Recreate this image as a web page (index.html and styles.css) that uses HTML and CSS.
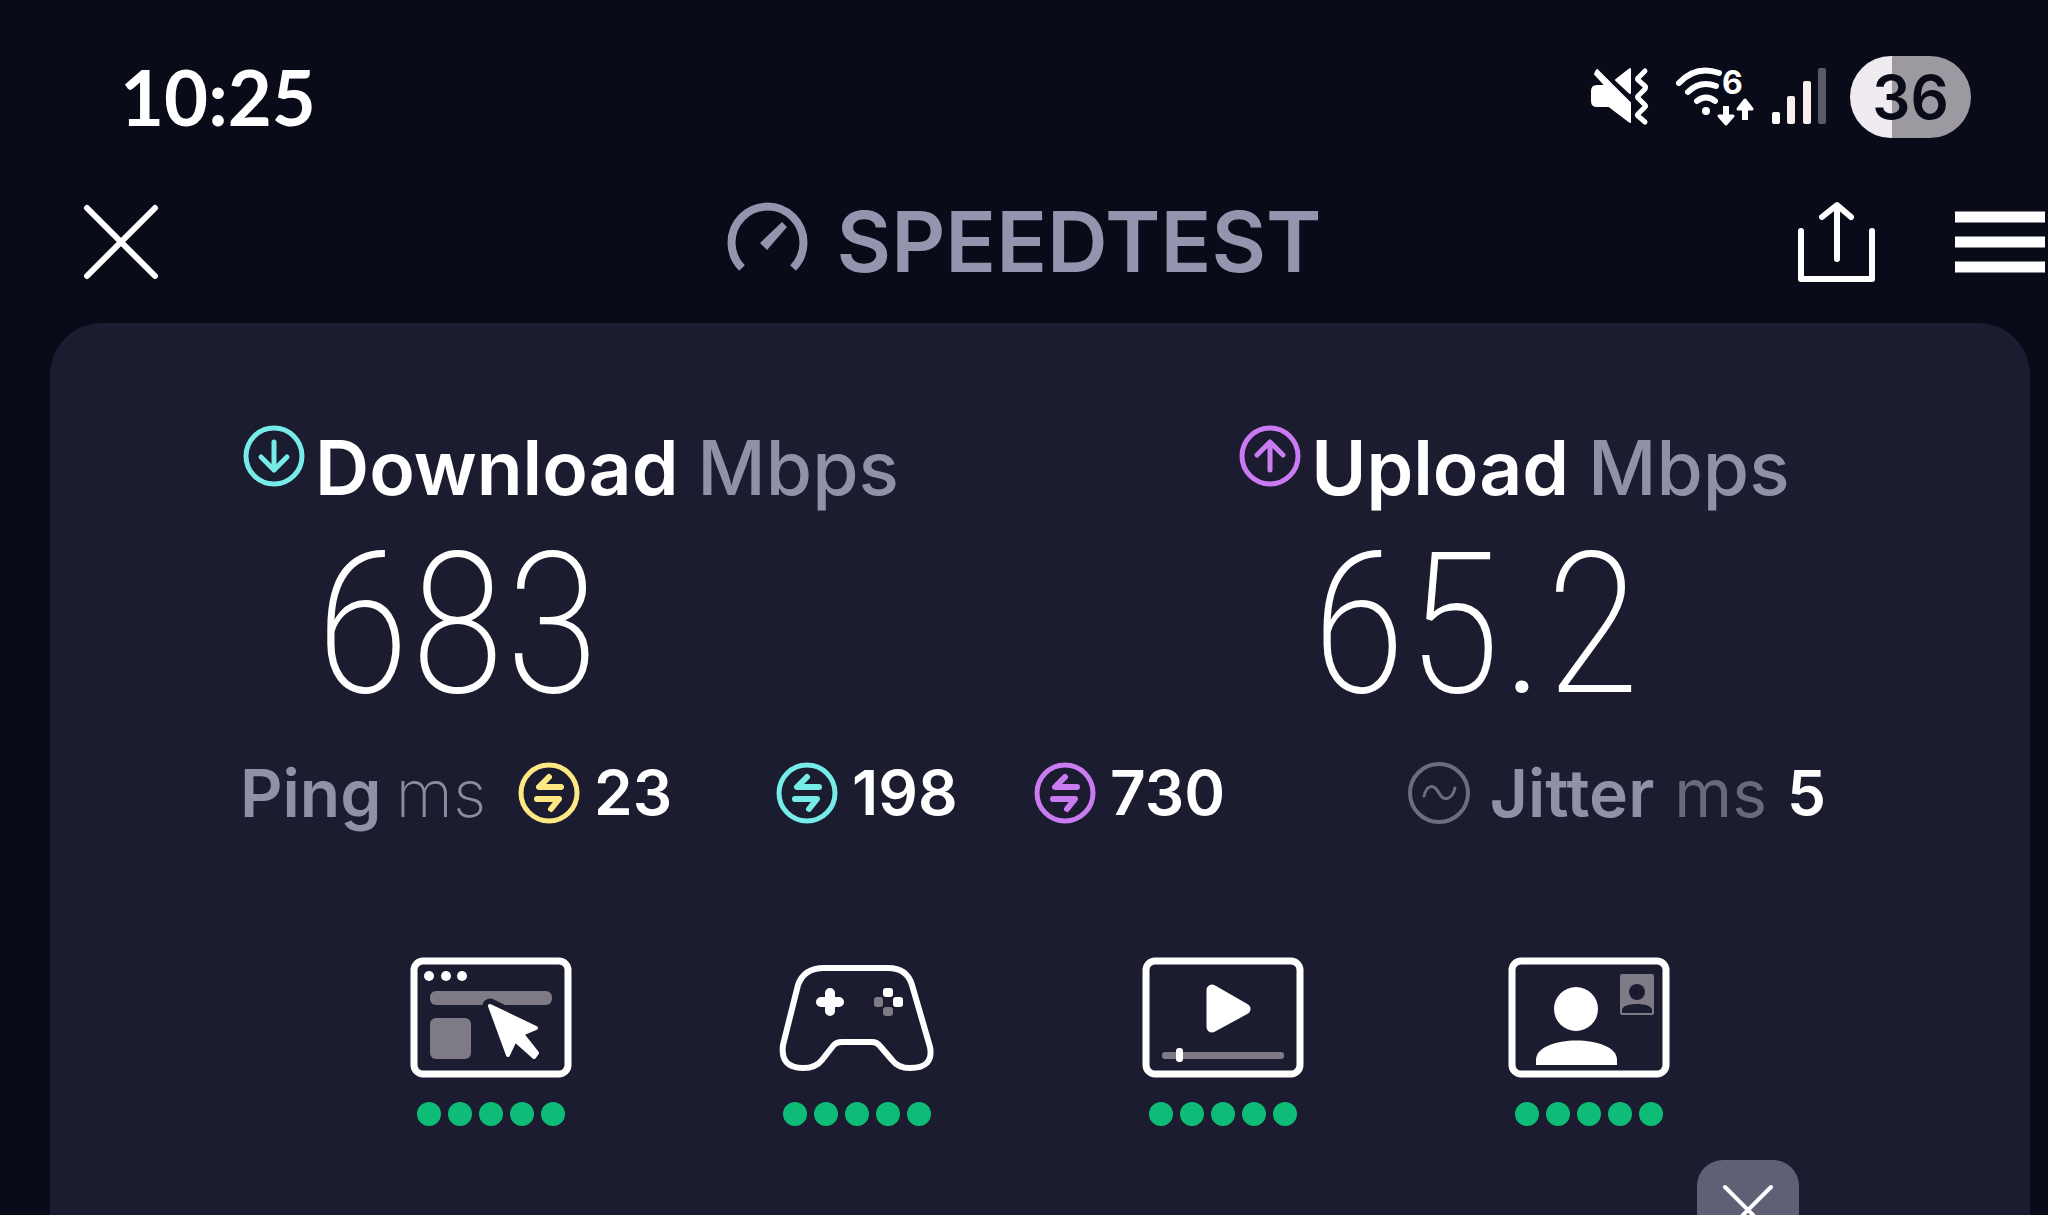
FILE: index.html
```html
<!DOCTYPE html>
<html lang="en">
<head>
  <meta charset="UTF-8" />
  <meta name="viewport" content="width=device-width, initial-scale=1.0"/>
  <title>Speedtest</title>
  <link rel="stylesheet" href="styles.css">
</head>
<body>
  <!-- shared shapes -->
  <svg class="defs" width="0" height="0" aria-hidden="true">
    <symbol id="swap" viewBox="0 0 62 62">
      <circle cx="31" cy="31" r="28" fill="none" stroke="currentColor" stroke-width="5"/>
      <path d="M31 15L21 25H43M19 37H41L33 47" fill="none" stroke="currentColor" stroke-width="6" stroke-linecap="round" stroke-linejoin="round"/>
    </symbol>
  </svg>

  <div class="status-bar">
    <time class="clock">10:25</time>
    <div class="status-icons">
      <svg width="74" height="64" viewBox="0 0 74 64" aria-label="Muted">
        <path d="M9 5L42 38V57L21 41H9Q4 41 4 36V26Q4 21 9 21H18L7 9Z" fill="#fff" stroke="#fff" stroke-width="2" stroke-linejoin="round"/>
        <path d="M28 15L42 4V28Z" fill="#fff" stroke="#fff" stroke-width="2" stroke-linejoin="round"/>
        <path d="M57 6L50 13Q49 14 50 15L57 21Q58 22 57 24L50 31Q49 32 50 33L57 40Q58 41 57 42L50 49Q49 50 50 51L57 57" fill="none" stroke="#fff" stroke-width="5" stroke-linecap="round"/>
      </svg>
      <svg width="84" height="64" viewBox="0 0 84 64" aria-label="Wi-Fi 6">
        <g fill="none" stroke="#fff" stroke-width="6" stroke-linecap="round">
          <path d="M5 18Q22 0 45 8"/>
          <path d="M14 27Q26 15 42 21"/>
          <path d="M23 36Q32 29 41 36"/>
          <path d="M52 41V56M71 38V55" stroke-linecap="butt"/>
        </g>
        <circle cx="32" cy="46" r="4" fill="#fff"/>
        <path d="M45 51H59L52 59ZM64 44H78L71 35Z" fill="#fff" stroke="#fff" stroke-width="3" stroke-linejoin="round"/>
        <text x="48" y="29" class="wifi-gen">6</text>
      </svg>
      <svg width="68" height="64" viewBox="0 0 68 64" aria-label="Signal">
        <rect x="2" y="47" width="8" height="12" rx="2" fill="#fff"/>
        <rect x="17" y="31" width="8" height="28" rx="2" fill="#f8efee"/>
        <rect x="33" y="16" width="8" height="43" rx="2" fill="#f8efee"/>
        <rect x="48" y="3" width="8" height="56" rx="2" fill="#5b5b67"/>
      </svg>
      <span class="battery">36</span>
    </div>
  </div>

  <header>
    <div class="left">
      <button class="icon-btn" aria-label="Close">
        <svg width="76" height="76" viewBox="0 0 76 76"><path d="M4 4L72 72M72 4L4 72" fill="none" stroke="#fff" stroke-width="6" stroke-linecap="round"/></svg>
      </button>
    </div>
    <h1>
      <svg width="82" height="82" viewBox="0 0 82 82" aria-hidden="true">
        <path d="M15 67A36 36 0 1 1 66 67" fill="none" stroke="#9394ad" stroke-width="8"/>
        <path d="M55 21L60 26L40 49L33 42Z" fill="#9394ad"/>
      </svg>
      SPEEDTEST
    </h1>
    <div class="actions">
      <button class="icon-btn" aria-label="Share">
        <svg width="80" height="82" viewBox="0 0 80 82"><path d="M4 30V78H75V30M40 58V5M25 16L40 4L54 16" fill="none" stroke="#fff" stroke-width="6" stroke-linecap="round" stroke-linejoin="round"/></svg>
      </button>
      <button class="icon-btn" aria-label="Menu">
        <svg width="90" height="62" viewBox="0 0 90 62"><path d="M0 6H90M0 31H90M0 56H90" stroke="#fff" stroke-width="11"/></svg>
      </button>
    </div>
  </header>

  <main class="panel">
    <div class="speeds">
      <section class="speed">
        <svg class="download" width="62" height="62" viewBox="0 0 62 62" aria-hidden="true">
          <circle cx="31" cy="31" r="28" fill="none" stroke="currentColor" stroke-width="5"/>
          <path d="M31 17V45M18 32L31 45L44 32" fill="none" stroke="currentColor" stroke-width="5" stroke-linecap="round" stroke-linejoin="round"/>
        </svg>
        <h2>Download <span>Mbps</span></h2>
        <p class="value">683</p>
      </section>
      <section class="speed">
        <svg class="upload" width="62" height="62" viewBox="0 0 62 62" aria-hidden="true">
          <circle cx="31" cy="31" r="28" fill="none" stroke="currentColor" stroke-width="5"/>
          <path d="M31 45V17M18 30L31 17L44 30" fill="none" stroke="currentColor" stroke-width="5" stroke-linecap="round" stroke-linejoin="round"/>
        </svg>
        <h2>Upload <span>Mbps</span></h2>
        <p class="value">65.2</p>
      </section>
    </div>

    <div class="latency">
      <div class="ping">
        <span class="label">Ping</span>
        <span class="unit thin">ms</span>
      </div>
      <div class="reading"><svg class="idle" width="62" height="62"><use href="#swap"/></svg>23</div>
      <div class="reading"><svg class="download" width="62" height="62"><use href="#swap"/></svg>198</div>
      <div class="reading"><svg class="upload" width="62" height="62"><use href="#swap"/></svg>730</div>
      <div class="jitter">
        <svg width="62" height="62" viewBox="0 0 62 62" fill="none" stroke="#6d6d7e" aria-hidden="true">
          <circle cx="31" cy="31" r="29" stroke-width="4"/>
          <path d="M16 34C19 22 26 22 31 31C36 40 44 38 47 26" stroke-width="3" stroke-linecap="round"/>
        </svg>
        <span class="label">Jitter</span>
        <span class="unit">ms</span>
        <span>5</span>
      </div>
    </div>

    <ul class="quality">
      <li>
        <svg width="162" height="121" viewBox="0 0 162 121" aria-label="Browsing">
          <rect x="4" y="4" width="154" height="113" rx="9" fill="none" stroke="#fff" stroke-width="7"/>
          <g fill="#fff"><circle cx="19" cy="19" r="5"/><circle cx="36" cy="19" r="5"/><circle cx="52" cy="19" r="5"/></g>
          <rect x="20" y="34" width="122" height="14" rx="6" fill="#7e7b87"/>
          <rect x="20" y="61" width="41" height="41" rx="6" fill="#7e7b87"/>
          <path d="M80 49L126 72L111 79L98 98Z" fill="#1b1c2f" stroke="#1b1c2f" stroke-width="15" stroke-linejoin="round"/>
          <path d="M80 49L126 71L112 77L127 96L124 100L105 83L98 98Z" fill="#fff" stroke="#fff" stroke-width="4" stroke-linejoin="round"/>
        </svg>
        <div class="dots"><i></i><i></i><i></i><i></i><i></i></div>
      </li>
      <li>
        <svg width="162" height="121" viewBox="0 0 162 121" aria-label="Gaming">
          <path d="M48 11H112Q131 11 136 28L154 90Q158 111 134 111Q122 111 116 103L104 89Q101 85 96 85H66Q60 85 57 89L46 103Q40 111 27 111Q4 111 7 88L22 28Q28 11 48 11Z" fill="none" stroke="#fff" stroke-width="6"/>
          <path d="M54 36V54M45 45H63" stroke="#fff" stroke-width="10" stroke-linecap="round"/>
          <rect x="107" y="31" width="10" height="9" rx="3" fill="#fff"/>
          <rect x="117" y="40" width="10" height="10" rx="3" fill="#fff"/>
          <rect x="98" y="40" width="9" height="10" rx="3" fill="#7e7b87"/>
          <rect x="107" y="50" width="10" height="9" rx="3" fill="#7e7b87"/>
        </svg>
        <div class="dots"><i></i><i></i><i></i><i></i><i></i></div>
      </li>
      <li>
        <svg width="162" height="121" viewBox="0 0 162 121" aria-label="Streaming">
          <rect x="4" y="4" width="154" height="113" rx="9" fill="none" stroke="#fff" stroke-width="7"/>
          <path d="M70 33V70L103 52Z" fill="#fff" stroke="#fff" stroke-width="11" stroke-linejoin="round"/>
          <rect x="20" y="95" width="122" height="7" rx="3" fill="#7e7b87"/>
          <rect x="34" y="91" width="7" height="14" rx="3" fill="#fff"/>
        </svg>
        <div class="dots"><i></i><i></i><i></i><i></i><i></i></div>
      </li>
      <li>
        <svg width="162" height="121" viewBox="0 0 162 121" aria-label="Video chat">
          <rect x="4" y="4" width="154" height="113" rx="9" fill="none" stroke="#fff" stroke-width="7"/>
          <circle cx="68" cy="52" r="22" fill="#fff"/>
          <path d="M28 108V103C28 77 109 77 109 103V108Z" fill="#fff"/>
          <rect x="112" y="17" width="34" height="41" rx="2" fill="#7e7b87"/>
          <circle cx="129" cy="35" r="8" fill="#1b1c2f"/>
          <path d="M114 56V53C114 45 144 45 144 53V56Z" fill="#1b1c2f"/>
        </svg>
        <div class="dots"><i></i><i></i><i></i><i></i><i></i></div>
      </li>
    </ul>

    <button class="dismiss" aria-label="Dismiss">
      <svg width="50" height="50" viewBox="0 0 50 50"><path d="M2 2L48 48M48 2L2 48" stroke="#fff" stroke-width="4" stroke-linecap="round"/></svg>
    </button>
  </main>
</body>
</html>
```
FILE: styles.css
```css
body {
  font-family: Inter, "Liberation Sans", sans-serif;
  margin: 0;
  height: 100vh;
  overflow: hidden;
  display: flex;
  flex-direction: column;
  background-color: #090b18;
  color: #fff;
}

svg {
  display: block;
  flex: none;
  overflow: visible;
}

.defs {
  position: absolute;
}

h1, h2, p, ul {
  margin: 0;
  padding: 0;
}

button {
  background: none;
  border: none;
  padding: 0;
  cursor: pointer;
}

.status-bar {
  flex: none;
  height: 193px;
  padding: 0 77px 0 120px;
  display: flex;
  justify-content: space-between;
  align-items: center;
}

.clock {
  font-family: Lato, sans-serif;
  font-size: 76px;
  font-weight: 700;
  line-height: 96px;
}

.status-icons {
  display: flex;
  align-items: center;
  gap: 12px;
}

.wifi-gen {
  font-size: 32px;
  font-weight: 700;
  fill: #fff;
}

.battery {
  width: 121px;
  line-height: 82px;
  border-radius: 41px;
  background: linear-gradient(to right, #efebf1 35%, #9c99a1 35%);
  color: #090b18;
  font-size: 60px;
  font-weight: 600;
  text-align: center;
}

header {
  flex: none;
  height: 98px;
  margin-bottom: 32px;
  display: grid;
  grid-template-columns: 1fr auto 1fr;
  align-items: center;
}

header .icon-btn {
  display: flex;
}

.left {
  padding-left: 83px;
}

h1 {
  display: flex;
  align-items: center;
  gap: 28px;
  font-size: 84px;
  font-weight: 600;
  line-height: 98px;
  color: #9394ad;
}

.actions {
  display: flex;
  justify-content: flex-end;
  align-items: center;
  gap: 78px;
  padding-right: 3px;
}

.panel {
  flex: 1;
  margin: 0 18px 0 50px;
  border-radius: 52px 52px 0 0;
  background-color: #1b1c2f;
  overflow: hidden;
}

.speeds {
  display: grid;
  grid-template-columns: 5fr 3fr;
  padding: 102px 193px 0;
}

.speed {
  display: grid;
  grid-template-columns: 62px auto;
  column-gap: 10px;
}

.speed h2 {
  font-size: 75px;
  font-weight: 600;
  line-height: 86px;
  white-space: nowrap;
}

.speed h2 span {
  font-weight: 500;
  color: #9091a9;
}

.value {
  grid-column: 2;
  font-family: "Roboto Condensed", Roboto, sans-serif;
  font-size: 196px;
  font-weight: 200;
  line-height: 228px;
}

.download {
  color: #76ebe8;
}

.upload {
  color: #ca7bf2;
}

.idle {
  color: #fde884;
}

.latency {
  display: grid;
  grid-template-columns: 278px 258px 258px 258px 1fr;
  align-items: center;
  margin-top: 16px;
  padding: 0 204px 0 190px;
  font-size: 62px;
  font-weight: 600;
  line-height: 76px;
}

.ping,
.reading,
.jitter {
  display: flex;
  align-items: center;
  gap: 14px;
}

.jitter {
  justify-content: flex-end;
  gap: 20px;
}

.label {
  font-size: 66px;
  font-weight: 600;
  color: #9091a9;
}

.unit {
  font-size: 66px;
  font-weight: 400;
  color: #686979;
}

.thin {
  font-weight: 200;
  color: #8b8ca0;
}

.quality {
  display: grid;
  grid-template-columns: repeat(4, 1fr);
  justify-items: center;
  width: 74%;
  margin: 126px auto 0;
  list-style: none;
}

.dots {
  display: flex;
  justify-content: center;
  gap: 7px;
  margin-top: 24px;
}

.dots i {
  width: 24px;
  height: 24px;
  border-radius: 50%;
  background-color: #0fbc77;
}

.dismiss {
  display: flex;
  justify-content: center;
  align-items: center;
  width: 102px;
  height: 100px;
  margin: 34px 231px 0 auto;
  border-radius: 26px;
  background-color: #5f6075;
}
```
